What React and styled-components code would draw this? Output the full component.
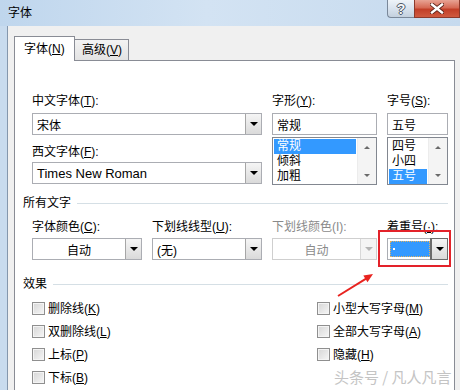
import React from "react";
import styled, { createGlobalStyle } from "styled-components";

const GlobalStyle = createGlobalStyle`
  html, body { margin: 0; padding: 0; }
  body {
    width: 460px;
    height: 390px;
    overflow: hidden;
    font-family: "Liberation Sans", "Noto Sans CJK SC", sans-serif;
    font-size: 12px;
    color: #000;
  }
`;

// 창 전체
const Window = styled.div`
  position: relative;
  width: 460px;
  height: 390px;
  overflow: hidden;
  display: flex;
  flex-direction: column;
  background: #c8dbee;
`;

const TitleBar = styled.div`
  height: 26px;
  flex-shrink: 0;
  display: flex;
  align-items: flex-start;
  background: linear-gradient(90deg, #bfd6ed 0%, #d3e3f3 45%, #c6daee 100%);
`;

const Title = styled.div`
  padding: 6px 0 0 8px;
  line-height: 14px;
  font-size: 12px;
`;

const Controls = styled.div`
  margin-left: auto;
  display: flex;
`;

const HelpButton = styled.div`
  width: 26px;
  height: 17px;
  border: 1px solid #7a8899;
  border-top: none;
  border-right: none;
  border-bottom-left-radius: 4px;
  background: linear-gradient(#eef3f8 0%, #d9e3ee 50%, #c3d0de 100%);
  display: flex;
  align-items: center;
  justify-content: center;
  font-weight: bold;
  font-size: 14px;
  line-height: 14px;
  color: #f4f6f9;
  text-shadow: -1px 0 #4d5866, 1px 0 #4d5866, 0 -1px #4d5866, 0 1px #4d5866;
`;

const CloseButton = styled.div`
  width: 44px;
  height: 17px;
  border: 1px solid #8c3a2c;
  border-top: none;
  background: linear-gradient(#e8a394 0%, #d66a55 45%, #c23f28 55%, #cf5a40 100%);
  display: flex;
  align-items: center;
  justify-content: center;
`;

const Client = styled.div`
  flex: 1;
  margin-left: 7px;
  border-left: 1px solid #8497ad;
  background: #f0f0f0;
  padding: 10px 0 0 6px;
  display: flex;
  flex-direction: column;
`;

const TabRow = styled.div`
  display: flex;
  align-items: flex-end;
  margin-bottom: -1px;
  position: relative;
  z-index: 1;
`;

const Tab = styled.div`
  box-sizing: border-box;
  height: ${(p) => (p.$active ? "25px" : "22px")};
  width: ${(p) => (p.$active ? "61px" : "54px")};
  padding-left: ${(p) => (p.$active ? "9px" : "7px")};
  border: 1px solid #898c95;
  border-bottom: ${(p) => (p.$active ? "none" : "1px solid #898c95")};
  border-left: ${(p) => (p.$active ? "1px solid #898c95" : "none")};
  background: ${(p) => (p.$active ? "#fff" : "linear-gradient(#f3f3f3, #e3e3e3)")};
  display: flex;
  align-items: center;
  line-height: 14px;
  font-size: 12px;
`;

const Panel = styled.div`
  box-sizing: border-box;
  width: 441px;
  flex: 1;
  border: 1px solid #898c95;
  border-bottom: none;
  background: #fff;
  padding: 33px 6px 0 8px;
`;

const Fields = styled.div`
  margin-left: 9px;
  display: grid;
  grid-template-columns: ${(p) => p.$cols};
  column-gap: 10px;
`;

const Column = styled.div`
  display: flex;
  flex-direction: column;
`;

const Label = styled.div`
  line-height: 14px;
  height: 14px;
  white-space: nowrap;
  margin-top: ${(p) => p.$gap || 0}px;
  color: ${(p) => (p.$disabled ? "#8a8a8a" : "#000")};
`;

const Combo = styled.div`
  box-sizing: border-box;
  height: 22px;
  margin-top: ${(p) => p.$gap || 0}px;
  border: 1px solid ${(p) => (p.$disabled ? "#cfcfcf" : "#abadb3")};
  background: #fff;
  display: flex;
  align-items: stretch;
`;

const Value = styled.div`
  flex: 1;
  display: flex;
  align-items: center;
  justify-content: ${(p) => (p.$center ? "center" : "flex-start")};
  padding-left: ${(p) => (p.$center ? "0" : "4px")};
  font-size: ${(p) => (p.$latin ? "13px" : "12px")};
  color: ${(p) => (p.$disabled ? "#8a8a8a" : "#000")};
  white-space: nowrap;
`;

const DropButton = styled.div`
  width: 15px;
  border-left: 1px solid ${(p) => (p.$disabled ? "#d8d8d8" : p.$focus ? "#6b6b6b" : "#a6a6a6")};
  outline: ${(p) => (p.$focus ? "1px solid #6b6b6b" : "none")};
  background: ${(p) => (p.$disabled ? "#f4f4f4" : "linear-gradient(#f5f5f5, #dadada)")};
  display: flex;
  align-items: center;
  justify-content: center;

  &::after {
    content: "";
    border-left: 4px solid transparent;
    border-right: 4px solid transparent;
    border-top: 4px solid ${(p) => (p.$disabled ? "#b4b4b4" : "#000")};
  }
`;

const Selection = styled.div`
  flex: 1;
  margin: 2px 1px 2px 2px;
  background: #3399ff;
  border: 1px dotted #e0b060;
  display: flex;
  align-items: center;
  padding-left: 2px;

  &::before {
    content: "";
    width: 2px;
    height: 2px;
    background: #fff;
  }
`;

const TextBox = styled(Combo)`
  border-color: #abadb3;
`;

const ListBox = styled.div`
  box-sizing: border-box;
  height: 48px;
  margin-top: 2px;
  border: 1px solid #828790;
  background: #fff;
  display: flex;
`;

const Items = styled.div`
  flex: 1;
  padding: 1px;
  display: flex;
  flex-direction: column;
`;

const Item = styled.div`
  height: 15px;
  line-height: 15px;
  padding-left: 3px;
  background: ${(p) => (p.$selected ? "#3399ff" : "transparent")};
  color: ${(p) => (p.$selected ? "#fff" : "#000")};
`;

const ScrollBar = styled.div`
  width: 18px;
  background: #f4f4f4;
  border-left: 1px solid #ececec;
  display: flex;
  flex-direction: column;
  justify-content: space-between;
  align-items: center;
  padding: 8px 0 7px;
`;

const ScrollArrow = styled.div`
  border-left: 3px solid transparent;
  border-right: 3px solid transparent;
  ${(p) =>
    p.$up
      ? "border-bottom: 3px solid #6a6a6a;"
      : "border-top: 3px solid #6a6a6a;"}
`;

const SectionHeader = styled.div`
  display: flex;
  align-items: center;
  height: 14px;
  line-height: 14px;
  margin-top: ${(p) => p.$gap}px;

  &::after {
    content: "";
    flex: 1;
    height: 1px;
    margin-left: 6px;
    background: #d5dfe5;
  }
`;

const CheckGrid = styled.div`
  margin: 6px 0 0 9px;
  display: grid;
  grid-template-columns: 285px 1fr;
  grid-template-rows: repeat(4, 23px);
  grid-auto-flow: column;
`;

const CheckItem = styled.label`
  display: flex;
  align-items: center;
  gap: 3px;
  line-height: 14px;
`;

const Box = styled.span`
  box-sizing: border-box;
  width: 13px;
  height: 13px;
  border: 1px solid #8f8f8f;
  background: linear-gradient(135deg, #d6d6d6 0%, #f6f6f6 100%);
  box-shadow: inset 0 0 0 1px #f4f4f4;
`;

// 주석 (빨간 상자, 화살표)
const Highlight = styled.div`
  position: absolute;
  left: 378px;
  top: 230px;
  width: 73px;
  height: 37px;
  box-sizing: border-box;
  border: 2px solid #e3222a;
`;

const Arrow = styled.svg`
  position: absolute;
  left: 330px;
  top: 268px;
`;

const Watermark = styled.div`
  position: absolute;
  left: 334px;
  top: 367px;
  font-family: "Noto Sans CJK SC", sans-serif;
  font-size: 15px;
  line-height: 20px;
  color: #c4c4c4;
  text-shadow: 0 0 2px #fff;
  white-space: nowrap;
`;

const Dropdown = ({ value, center, latin, disabled, gap }) => (
  <Combo $gap={gap} $disabled={disabled}>
    <Value $center={center} $latin={latin} $disabled={disabled}>
      {value}
    </Value>
    <DropButton $disabled={disabled} />
  </Combo>
);

const List = ({ items, selected }) => (
  <ListBox>
    <Items>
      {items.map((it) => (
        <Item key={it} $selected={it === selected}>
          {it}
        </Item>
      ))}
    </Items>
    <ScrollBar>
      <ScrollArrow $up />
      <ScrollArrow />
    </ScrollBar>
  </ListBox>
);

const Check = ({ text, k }) => (
  <CheckItem>
    <Box />
    <span>
      {text}(<u>{k}</u>)
    </span>
  </CheckItem>
);

function App() {
  return (
    <>
      <GlobalStyle />
      <Window>
        <TitleBar>
          <Title>字体</Title>
          <Controls>
            <HelpButton>?</HelpButton>
            <CloseButton>
              <svg width="14" height="11" viewBox="0 0 14 11">
                <path d="M2 1.5 L12 9.5 M12 1.5 L2 9.5" stroke="#5b2218" strokeWidth="4.2" strokeLinecap="square" />
                <path d="M2 1.5 L12 9.5 M12 1.5 L2 9.5" stroke="#fff" strokeWidth="2.4" strokeLinecap="square" />
              </svg>
            </CloseButton>
          </Controls>
        </TitleBar>

        <Client>
          <TabRow>
            <Tab $active>
              字体(<u>N</u>)
            </Tab>
            <Tab>
              高级(<u>V</u>)
            </Tab>
          </TabRow>
          <Panel>
            <Fields $cols="230px 105px 61px">
              <Column>
                <Label>
                  中文字体(<u>T</u>):
                </Label>
                <Dropdown value="宋体" gap={5} />
                <Label $gap={10}>
                  西文字体(<u>F</u>):
                </Label>
                <Dropdown value="Times New Roman" latin gap={3} />
              </Column>
              <Column>
                <Label>
                  字形(<u>Y</u>):
                </Label>
                <TextBox $gap={5}>
                  <Value>常规</Value>
                </TextBox>
                <List items={["常规", "倾斜", "加粗"]} selected="常规" />
              </Column>
              <Column>
                <Label>
                  字号(<u>S</u>):
                </Label>
                <TextBox $gap={5}>
                  <Value>五号</Value>
                </TextBox>
                <List items={["四号", "小四", "五号"]} selected="五号" />
              </Column>
            </Fields>

            <SectionHeader $gap={11}>所有文字</SectionHeader>
            <Fields $cols="110px 110px 105px 61px" style={{ marginTop: 10 }}>
              <Column>
                <Label>
                  字体颜色(<u>C</u>):
                </Label>
                <Dropdown value="自动" center gap={4} />
              </Column>
              <Column>
                <Label>
                  下划线线型(<u>U</u>):
                </Label>
                <Dropdown value="(无)" gap={4} />
              </Column>
              <Column>
                <Label $disabled>下划线颜色(I):</Label>
                <Dropdown value="自动" center disabled gap={4} />
              </Column>
              <Column>
                <Label>
                  着重号(<u>·</u>):
                </Label>
                <Combo $gap={4}>
                  <Selection />
                  <DropButton $focus />
                </Combo>
              </Column>
            </Fields>

            <SectionHeader $gap={17}>效果</SectionHeader>
            <CheckGrid>
              <Check text="删除线" k="K" />
              <Check text="双删除线" k="L" />
              <Check text="上标" k="P" />
              <Check text="下标" k="B" />
              <Check text="小型大写字母" k="M" />
              <Check text="全部大写字母" k="A" />
              <Check text="隐藏" k="H" />
            </CheckGrid>
          </Panel>
        </Client>

        <Highlight />
        <Arrow width="50" height="35" viewBox="0 0 50 35">
          <path d="M8 28 L36.5 10.4" stroke="#e8231f" strokeWidth="2" />
          <path d="M43 6 L37.5 14.2 L33.3 7.4 Z" fill="#e8231f" />
        </Arrow>
        <Watermark>头条号 / 凡人凡言</Watermark>
      </Window>
    </>
  );
}

export default App;
